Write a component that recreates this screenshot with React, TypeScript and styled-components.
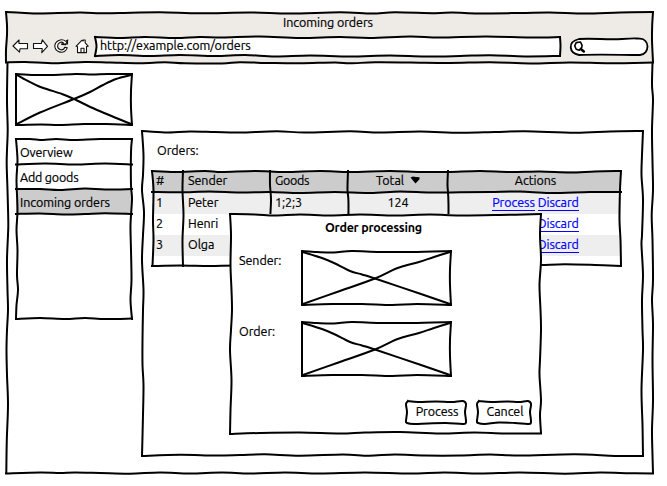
import React from "react";
import styled, { createGlobalStyle } from "styled-components";

const GlobalStyle = createGlobalStyle`
  * { box-sizing: border-box; }
  body { margin: 0; background: #fff; color: #000; font: 12.5px/17px Ubuntu, "Noto Sans", sans-serif; }
`;

/* ---------- hand-drawn strokes ---------- */

const curve = (line: string) => {
  const p = line.trim().split(/\s+/).map((s) => s.split(",").map(Number));
  let d = `M${p[0][0]} ${p[0][1]}`;
  for (let i = 0; i < p.length - 1; i++) {
    const a = p[i - 1] || p[i];
    const b = p[i];
    const c = p[i + 1];
    const e = p[i + 2] || c;
    d += `C${b[0] + (c[0] - a[0]) / 6} ${b[1] + (c[1] - a[1]) / 6} ${c[0] - (e[0] - b[0]) / 6} ${c[1] - (e[1] - b[1]) / 6} ${c[0]} ${c[1]}`;
  }
  return d;
};

const Drawing = styled.svg`
  position: absolute;
  inset: 0;
  width: 100%;
  height: 100%;
  overflow: visible;
  pointer-events: none;
  fill: none;
  stroke: #000;
  stroke-width: 2;
  stroke-linecap: square;
`;

const Sketch = ({ box, lines }: { box: string; lines: string[] }) => (
  <Drawing viewBox={box} preserveAspectRatio="none" aria-hidden>
    {lines.map((l) => (
      <path key={l} d={curve(l)} />
    ))}
  </Drawing>
);

/* ---------- layout ---------- */

const Screen = styled.div`
  width: 667px;
  height: 486px;
  padding: 12px 0 0 6px;
  background: #fff;
`;
const Browser = styled.div`
  position: relative;
  width: 647px;
  height: 462px;
  display: flex;
  flex-direction: column;
`;
const Chrome = styled.header`
  height: 51px;
  background: #eeebe7;
`;
const Text = styled.span<{ $track?: number; $bold?: boolean }>`
  white-space: nowrap;
  letter-spacing: ${(p) => p.$track ?? -0.06}px;
  font-weight: ${(p) => (p.$bold ? 700 : 400)};
  -webkit-text-stroke: ${(p) => (p.$bold ? 0 : 0.2)}px currentColor;
`;
const WindowTitle = styled.div`
  height: 25px;
  padding: 2px 0 0 277px;
`;
const Toolbar = styled.div`
  display: flex;
  height: 20px;
`;
const NavIcons = styled.svg`
  width: 89px;
  height: 20px;
  fill: #fff;
  stroke: #111;
  stroke-width: 1.1;
  stroke-linejoin: round;
`;
const Address = styled.div`
  position: relative;
  width: 465px;
  height: 19px;
  padding-left: 5px;
  background: #fff;
`;
const Search = styled.div`
  margin: 1px 0 0 10px;
  width: 78px;
  height: 18px;
  svg { display: block; }
`;
const Body = styled.div`
  display: flex;
  gap: 10px;
  padding: 11px 0 0 10px;
`;
const Side = styled.aside`
  width: 116px;
`;
const Placeholder = styled.div<{ $h: number }>`
  position: relative;
  height: ${(p) => p.$h}px;
`;
const Menu = styled.nav`
  position: relative;
  margin-top: 14px;
  height: 180px;
`;
const MenuItem = styled.div<{ $active?: boolean }>`
  height: 25px;
  padding: 5px 0 0 4px;
  background: ${(p) => (p.$active ? "#ccc" : "transparent")};
`;
const Panel = styled.main`
  position: relative;
  margin-top: 57px;
  width: 501px;
  height: 325px;
  padding: 11px 0 0 10px;
`;
const PanelTitle = styled.div`
  height: 29px;
  padding-left: 5px;
`;
const Table = styled.div`
  position: relative;
  width: 469px;
  height: 95px;
`;
const Row = styled.div<{ $bg: string }>`
  display: grid;
  grid-template-columns: 31px 87px 78px 100px 173px;
  height: 21px;
  padding-top: 1px;
  background: ${(p) => p.$bg};
`;
const HeadRow = styled(Row)`
  height: 22px;
  padding-top: 1px;
`;
const Cell = styled.div<{ $center?: boolean }>`
  padding-left: ${(p) => (p.$center ? 0 : 5)}px;
  text-align: ${(p) => (p.$center ? "center" : "left")};
  white-space: nowrap;
  &:first-child { padding-left: 4px; }
  &:last-child { padding-left: 2px; }
`;
const Actions = styled(Cell)`
  display: flex;
  justify-content: center;
  gap: 3px;
  &:last-child { padding: 0 0 0 2px; }
`;
const Link = styled.a`
  height: 17px;
  color: #00f;
  text-decoration: none;
  border-bottom: 1px solid #00f;
  line-height: 17px;
  letter-spacing: -0.06px;
  -webkit-text-stroke: 0.2px #00f;
  white-space: nowrap;
`;
const SortMark = styled.svg`
  width: 10px;
  height: 8px;
  margin-left: 6px;
  vertical-align: 1px;
`;
const Dialog = styled.section`
  position: absolute;
  left: 224px;
  top: 202px;
  width: 311px;
  height: 220px;
  padding: 5px 9px 0;
  background: #fff;
`;
const DialogTitle = styled.h1`
  margin: 0;
  height: 32px;
  padding-left: 86px;
  font: inherit;
`;
const Field = styled.div`
  display: grid;
  grid-template-columns: 63px 149px;
  height: 71px;
`;
const FieldLabel = styled.div`
  padding-top: 1px;
`;
const Buttons = styled.div`
  display: flex;
  justify-content: flex-end;
  gap: 11px;
  padding: 8px 1px 0 0;
`;
const Button = styled.button<{ $w: number }>`
  position: relative;
  width: ${(p) => p.$w}px;
  height: 23px;
  padding: 0 0 2px 2px;
  border: 0;
  background: #fff;
  color: inherit;
  font: inherit;
  display: flex;
  align-items: center;
  justify-content: center;
`;

const pictureLines = [
  "0,0 18,1 36,1 60,0 76,.5 92,0 116,0",
  "116,0 115,17 115,34 116,51",
  "0,51 25,50.5 44,51 68,50 90,50 116,51",
  "0,0 0,51",
  "1,1 8,5 22,12 32,15.5 46,20 58,25 81,36 115,50",
  "1,50 24,38.5 58,25 74,18 87,11 100,5 115,1",
];
const fieldLines = [
  "0,0 15,1 32,1.5 50,0 78,1 110,1 149,0",
  "149,0 148,18 148,34 149,54",
  "0,54 30,53 60,53 90,54 115,53 149,54",
  "0,0 0,54",
  "1,1 20,7 32,12 48,20 60,23.5 73,27.5 119,43 148,53",
  "1,53 35,41 73,27.5 93,18 102,15 117,11 132,6 148,1",
];

const rows = [
  { id: "1", name: "Peter", goods: "1;2;3", total: "124" },
  { id: "2", name: "Henri", goods: "", total: "" },
  { id: "3", name: "Olga", goods: "", total: "" },
];

export default function App() {
  return (
    <Screen>
      <GlobalStyle />
      <Browser>
        <Chrome>
          <WindowTitle><Text>Incoming orders</Text></WindowTitle>
          <Toolbar>
            <NavIcons viewBox="6 37 89 20">
              <path d="M13 46l6-6v3.5h8.5v5.2H20l-.5 3.5z" />
              <path d="M47.5 46.4l-5.2-6.6-1 3.7H33.5v5h8.7l-.4 4.2z" />
              <path d="M65.5 44.8l2.4-4.8-2.2 1.3C61.5 37.8 55 41 54.8 46c.1 5.9 8 8.4 11.2 4l1.3-2.3-2.5-.4c-1.4 4-7 3-7.2-1-.1-3.6 4-5.2 6-3.2l-1.8 1.3z" />
              <path d="M61 44h6.5v-3.5" fill="none" />
              <path d="M76 46.3l6-6.1 1.2.8V40h2v2.8l3 3.3-1.7.4v6.1h-9V46.5z" />
              <path d="M81 52.5v-4.2h3v4.2" fill="none" />
            </NavIcons>
            <Address>
              <Text>http://example.com/orders</Text>
              <Sketch box="95 37 465 19" lines={[
                "95,37 120,38 145,37 175,38 200,37 222,37.5 260,36.5 300,38 340,37 370,38 410,36.5 440,37.5 486,36.4 530,37.5 560,37",
                "560,37 560.5,46 560,56",
                "95,56 120,55 150,56 180,55 215,56 245,55 275,56.5 310,55.5 350,56.5 390,55.5 425,56.5 460,56 490,55.2 525,56.4 560,56",
                "95,37 96.5,46 95,56",
              ]} />
            </Address>
            <Search>
              <svg width="78" height="18" viewBox="570 38 78 18" overflow="visible">
                <path d="M579 39C594 38 607 40 622 39S634 38.5 640 38.7C650 39 650 54 640 55C622 55 600 54 579 55C569 53 567 42 579 39Z" fill="#fff" stroke="#000" strokeWidth="1.8" />
                <path d="M580.5 42l-4.3.6-1.5 3.2 1.5 3.4 3 1.1 2.4-2.5.5-2.4z" fill="none" stroke="#000" strokeWidth="1.6" strokeLinejoin="round" />
                <path d="M580.8 49l3 2.4" stroke="#000" strokeWidth="2.6" strokeLinecap="round" />
              </svg>
            </Search>
          </Toolbar>
        </Chrome>
        <Body>
          <Side>
            <Placeholder $h={51}><Sketch box="0 0 116 51" lines={pictureLines} /></Placeholder>
            <Menu>
              <MenuItem><Text $track={-0.12}>Overview</Text></MenuItem>
              <MenuItem><Text $track={-0.2}>Add goods</Text></MenuItem>
              <MenuItem $active><Text>Incoming orders</Text></MenuItem>
              <Sketch box="16 139 116 180" lines={[
                "16,139 30,139 43,140 56,139 75,140 100,139 132,139",
                "16,139 17.5,160 16.5,180 17.5,210 16.5,230 17.5,250 17,275 18,290 16.5,305 16,319",
                "132,139 131,152 131,185 132,199 130.5,225 131,250 131.5,280 130.5,300 132,319",
                "16,319 40,318 65,319 85,318 105,319 132,318.5",
                "16,164.5 45,163.5 75,164.5 105,163.5 132,164.5",
                "16,189 40,189 60,190 85,188.5 105,189.5 132,189",
                "16,214 40,213.5 65,214.5 85,214 105,213.2 132,214",
              ]} />
            </Menu>
          </Side>
          <Panel>
            <PanelTitle><Text>Orders:</Text></PanelTitle>
            <Table>
              <HeadRow $bg="#ccc">
                <Cell><Text>#</Text></Cell>
                <Cell><Text>Sender</Text></Cell>
                <Cell><Text $track={-0.3}>Goods</Text></Cell>
                <Cell $center>
                  <Text>Total</Text>
                  <SortMark viewBox="0 0 10 8"><path d="M.5 1.5L3 .5 6 1l3.5.2v2L5.5 7.5z" /></SortMark>
                </Cell>
                <Cell $center><Text>Actions</Text></Cell>
              </HeadRow>
              {rows.map((r, i) => (
                <Row key={r.id} $bg={i % 2 ? "#fff" : "#eee"}>
                  <Cell><Text>{r.id}</Text></Cell>
                  <Cell><Text>{r.name}</Text></Cell>
                  <Cell><Text>{r.goods}</Text></Cell>
                  <Cell $center><Text>{r.total}</Text></Cell>
                  <Actions><Link>Process</Link><Link>Discard</Link></Actions>
                </Row>
              ))}
              <Sketch box="152 171 469 95" lines={[
                "152,171 175,172 205,171 222,172 255,171 285,172 320,171 350,172 390,171 420,172 448,172 480,171 510,172 540,171.5 570,172.5 595,171.5 621,171",
                "152,171 153.5,190 153,220 153.5,240 152.5,266",
                "621,171 620,190 619.5,220 620.5,240 621,266",
                "152,266 180,265.5 210,266 240,265.5 300,266 400,265 500,266 540,265 565,264.3 595,265 621,266",
                "152,192 180,192.3 210,191.5 240,192.5 270,192 300,193 335,192 370,193 400,191.5 430,192.5 460,192.3 490,192 520,191.5 550,193 590,192 621,192",
                "183,171 182.5,190 183.5,215 182.5,240 183,266",
                "270,171 270,185 271,200 270,225 270,266",
                "348,171 347.5,190 348.5,205 348,266",
                "448,171 447.5,185 448.5,205 448,266",
              ]} />
            </Table>
            <Sketch box="142 131 501 325" lines={[
              "142,131 165,132.5 190,131.5 215,132 240,132.5 277,131.3 305,132.5 350,131.3 380,132.5 420,131.5 460,132.8 495,132 525,131.3 575,132.7 610,131.5 643,131",
              "142,131 143.5,155 143,175 142,190 144,212 143,235 142,260 143.5,290 143,310 142.5,340 142.5,365 143.5,385 143,415 142,456",
              "643,131 642,155 641.5,175 643,200 642,235 641.5,245 643,275 642,300 642.5,330 643,350 641.5,390 642.5,425 643,456",
              "142,456 180,454.7 215,455.5 240,455 265,454.3 300,455.7 343,454.5 369,455.7 395,454.5 425,455.5 460,455.5 490,454.5 520,455.5 575,454.3 615,456 643,456",
            ]} />
          </Panel>
        </Body>
        <Sketch box="6 12 647 462" lines={[
          "6,12 25,13 40,13.5 80,12.5 100,13.3 120,13 160,12.3 200,13.3 250,12.5 290,13.6 340,12.3 372,13.6 395,12.3 435,13.3 452,12.5 475,13.4 520,13 550,12.5 585,13.6 620,12.5 653,12",
          "6,12 7,25 7,35 6,50 6,62",
          "653,12 652.2,25 652,40 653,62",
          "6,62.5 25,62 55,63.3 85,62 110,62.5 140,63.2 165,62.3 185,63.3 222,63.4 240,62.3 270,63 300,63.3 335,62.5 350,63.3 375,62.3 410,62.5 450,63 490,62.2 530,63.4 570,62.4 610,63.2 653,62.5",
          "7.5,63 7,100 7.7,130 7,150 6.7,165 7.5,190 8.3,222 8,235 7,260 7.5,290 8,310 7,330 6.5,350 7,375 8,405 6.8,440 6.3,473",
          "652.5,63 652,85 653,100 652,130 652.5,162 653,190 651.7,215 652.5,240 653,280 652,300 653,324 652.5,360 653,400 652,430 652.5,455 653,473",
          "6,473.5 40,472.5 60,473 75,472.5 100,473 130,473.7 160,472.5 190,473.5 222,472.5 250,473.5 285,472.5 320,473.5 365,472.5 410,473.6 444,472.5 480,473.5 520,472.5 565,473.7 600,472.5 630,473.2 653,473.5",
        ]} />
        <Dialog>
          <DialogTitle><Text $bold $track={-0.24}>Order processing</Text></DialogTitle>
          <Field>
            <FieldLabel><Text>Sender:</Text></FieldLabel>
            <Placeholder $h={54}><Sketch box="0 0 149 54" lines={fieldLines} /></Placeholder>
          </Field>
          <Field>
            <FieldLabel><Text>Order:</Text></FieldLabel>
            <Placeholder $h={54}><Sketch box="0 0 149 54" lines={fieldLines} /></Placeholder>
          </Field>
          <Buttons>
            <Button $w={60}>
              <Sketch box="0 0 60 23" lines={["2,0 12,1 30,.5 45,1 57,0 60,3 59,11 60,21 57,23 40,22 22,22.5 8,23 1,22 0,20 1,11 0,3 2,0"]} />
              <Text>Process</Text>
            </Button>
            <Button $w={54}>
              <Sketch box="0 0 54 23" lines={["2,0 14,1 30,.5 42,1 51,0 54,3 53,11 54,21 51,23 38,22 22,21.5 8,23 1,22 0,20 1,11 0,3 2,0"]} />
              <Text>Cancel</Text>
            </Button>
          </Buttons>
          <Sketch box="230 214 311 220" lines={[
            "230,214 255,214.5 275,215.5 300,214.5 330,215.5 360,214.5 395,215.5 430,214.5 460,215.5 500,215 541,214",
            "230,214 231,235 230.5,265 231.5,290 232,310 231,330 230,350 231.5,380 230.5,410 230,434",
            "541,214 540,235 541,260 539.5,285 540.5,310 541,330 540,360 539.5,375 541,400 540,415 541,433",
            "230,434 260,433 300,432.5 340,433.5 365,432.5 400,432 440,433.5 475,432.5 505,433.5 541,433.5",
          ]} />
        </Dialog>
      </Browser>
    </Screen>
  );
}
